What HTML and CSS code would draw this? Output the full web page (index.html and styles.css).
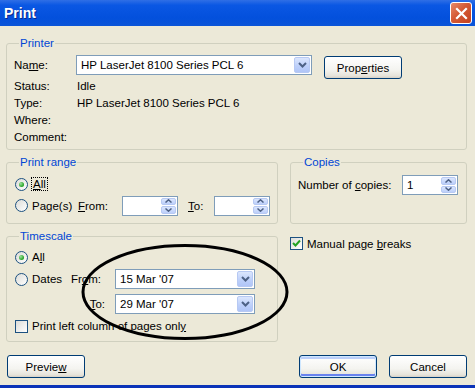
FILE: index.html
```html
<!DOCTYPE html>
<html>

<head>
    <meta charset="utf-8">
    <title>Print</title>
    <link rel="stylesheet" href="styles.css">
</head>

<body>
    <div class="window">
        <div class="titlebar">
            <span class="title">Print</span>
            <span class="close">
                <svg width="13" height="13" viewBox="0 0 13 13"><path d="M2 2 L11 11 M11 2 L2 11" stroke="#fff" stroke-width="2.2" stroke-linecap="square"/></svg>
            </span>
        </div>

        <div class="body">
            <!-- printer -->
            <fieldset class="group printer">
                <legend>Printer</legend>
                <div class="name-row">
                    <span class="lbl name-lbl">Na<u>m</u>e:</span>
                    <div class="combo wide">
                        <span class="combo-text">HP LaserJet 8100 Series PCL 6</span>
                        <span class="drop"><svg width="9" height="6" viewBox="0 0 9 6"><path d="M1 1 L4.5 4.5 L8 1" fill="none" stroke="#4d6185" stroke-width="2"/></svg></span>
                    </div>
                    <button class="btn props">Prop<u>e</u>rties</button>
                </div>
                <div class="info-row"><span class="lbl">Status:</span><span>Idle</span></div>
                <div class="info-row"><span class="lbl">Type:</span><span>HP LaserJet 8100 Series PCL 6</span></div>
                <div class="info-row"><span class="lbl">Where:</span><span></span></div>
                <div class="info-row"><span class="lbl">Comment:</span><span></span></div>
            </fieldset>

            <div class="middle">
                <div class="left-col">
                    <fieldset class="group range">
                        <legend>Print range</legend>
                        <div class="row r-all">
                            <span class="radio checked"></span><span class="focus"><u>A</u>ll</span>
                        </div>
                        <div class="row r-pages">
                            <span class="opt pages-opt"><span class="radio"></span>Page(s)</span>
                            <span class="from-lbl"><u>F</u>rom:</span>
                            <div class="spin">
                                <span class="spin-btns">
                                    <span class="sb"><svg width="7" height="4" viewBox="0 0 7 4"><path d="M0.5 3.5 L3.5 0.8 L6.5 3.5" fill="none" stroke="#4d6185" stroke-width="1.5"/></svg></span>
                                    <span class="sb"><svg width="7" height="4" viewBox="0 0 7 4"><path d="M0.5 0.5 L3.5 3.2 L6.5 0.5" fill="none" stroke="#4d6185" stroke-width="1.5"/></svg></span>
                                </span>
                            </div>
                            <span class="to-lbl"><u>T</u>o:</span>
                            <div class="spin">
                                <span class="spin-btns">
                                    <span class="sb"><svg width="7" height="4" viewBox="0 0 7 4"><path d="M0.5 3.5 L3.5 0.8 L6.5 3.5" fill="none" stroke="#4d6185" stroke-width="1.5"/></svg></span>
                                    <span class="sb"><svg width="7" height="4" viewBox="0 0 7 4"><path d="M0.5 0.5 L3.5 3.2 L6.5 0.5" fill="none" stroke="#4d6185" stroke-width="1.5"/></svg></span>
                                </span>
                            </div>
                        </div>
                    </fieldset>

                    <fieldset class="group timescale">
                        <legend>Timescale</legend>
                        <div class="row t-all">
                            <span class="radio checked"></span><span>A<u>l</u>l</span>
                        </div>
                        <div class="row t-dates">
                            <span class="opt dates-opt"><span class="radio"></span>Dates</span>
                            <span class="from-lbl">Fr<u>o</u>m:</span>
                            <div class="combo date">
                                <span class="combo-text">15 Mar '07</span>
                                <span class="drop"><svg width="9" height="6" viewBox="0 0 9 6"><path d="M1 1 L4.5 4.5 L8 1" fill="none" stroke="#4d6185" stroke-width="2"/></svg></span>
                            </div>
                        </div>
                        <div class="row t-to">
                            <span class="to-lbl2"><u>T</u>o:</span>
                            <div class="combo date">
                                <span class="combo-text">29 Mar '07</span>
                                <span class="drop"><svg width="9" height="6" viewBox="0 0 9 6"><path d="M1 1 L4.5 4.5 L8 1" fill="none" stroke="#4d6185" stroke-width="2"/></svg></span>
                            </div>
                        </div>
                        <div class="row t-left">
                            <span class="check"></span><span>Print left column of pages onl<u>y</u></span>
                        </div>
                    </fieldset>
                </div>

                <div class="right-col">
                    <fieldset class="group copies">
                        <legend>Copies</legend>
                        <div class="row c-num">
                            <span class="copies-lbl">Number of <u>c</u>opies:</span>
                            <div class="spin">
                                <span class="spin-text">1</span>
                                <span class="spin-btns">
                                    <span class="sb"><svg width="7" height="4" viewBox="0 0 7 4"><path d="M0.5 3.5 L3.5 0.8 L6.5 3.5" fill="none" stroke="#4d6185" stroke-width="1.5"/></svg></span>
                                    <span class="sb"><svg width="7" height="4" viewBox="0 0 7 4"><path d="M0.5 0.5 L3.5 3.2 L6.5 0.5" fill="none" stroke="#4d6185" stroke-width="1.5"/></svg></span>
                                </span>
                            </div>
                        </div>
                    </fieldset>
                    <div class="manual">
                        <span class="check checked"><svg width="11" height="11" viewBox="0 0 11 11"><path d="M2 5 L4.5 7.5 L9 2.5" fill="none" stroke="#21a121" stroke-width="2"/></svg></span>
                        <span>Manual page <u>b</u>reaks</span>
                    </div>
                </div>
            </div>

            <div class="buttons">
                <button class="btn preview">Previe<u>w</u></button>
                <div class="btn-pair">
                    <button class="btn default">OK</button>
                    <button class="btn">Cancel</button>
                </div>
            </div>
        </div>

        <!-- hand drawn mark over the dates -->
        <svg class="mark" width="475" height="388" viewBox="0 0 475 388">
            <ellipse cx="185" cy="292" rx="102" ry="46.5" fill="none" stroke="#000" stroke-width="3"/>
        </svg>
    </div>
</body>

</html>
```

FILE: styles.css
```css
* {
    box-sizing: border-box;
}

html,
body {
    margin: 0;
    padding: 0;
}

body {
    width: 475px;
    height: 388px;
    overflow: hidden;
    background: #ece9d8;
    font-family: "Liberation Sans", Arial, sans-serif;
    font-size: 11.5px;
    color: #000;
}

.window {
    position: relative;
    width: 475px;
    height: 388px;
    display: flex;
    flex-direction: column;
    border-bottom: 3px solid #0b33b8;
}

.titlebar {
    flex: none;
    height: 26px;
    display: flex;
    align-items: center;
    justify-content: space-between;
    padding: 0 3px 0 4px;
    background: linear-gradient(#2f6fe6, #0a57e3 20%, #0350dc 70%, #0b55d8);
}

.title {
    color: #fff;
    font-weight: bold;
    font-size: 14px;
    text-shadow: 1px 1px 0 #0a2a8c;
}

.close {
    width: 22px;
    height: 22px;
    display: flex;
    align-items: center;
    justify-content: center;
    border: 1px solid #fff;
    border-radius: 3px;
    background: linear-gradient(135deg, #e88a6a, #d55a35 45%, #c4411e);
}

.body {
    flex: 1;
    display: flex;
    flex-direction: column;
    padding: 10px 8px 0 6px;
}

/* group boxes */
.group {
    margin: 0;
    padding: 0 7px;
    border: 1px solid #d0d0bf;
    border-radius: 3px;
    min-width: 0;
}

.group legend {
    margin-left: 5px;
    padding: 0 1px;
    line-height: 14px;
    color: #0046d5;
}

.printer {
    height: 114px;
    padding-top: 4px;
}

.name-row {
    display: flex;
    align-items: flex-start;
    height: 23px;
}

.lbl {
    width: 63px;
    flex: none;
}

.name-lbl {
    width: 62px;
    line-height: 20px;
    margin-top: 1px;
}

.info-row {
    display: flex;
    align-items: center;
    height: 17px;
}

/* combo boxes */
.combo {
    display: flex;
    align-items: stretch;
    height: 20px;
    background: #fff;
    border: 1px solid #7f9db9;
    padding: 1px;
}

.combo.wide {
    width: 236px;
    margin-top: 1px;
}

.combo.date {
    width: 140px;
}

.combo-text {
    flex: 1;
    padding-left: 3px;
    line-height: 16px;
}

.drop {
    width: 16px;
    display: flex;
    align-items: center;
    justify-content: center;
    border: 1px solid #b7c9f3;
    border-radius: 2px;
    background: linear-gradient(#dbe6fd, #bccffa 60%, #b0c5f7);
}

.btn {
    width: 78px;
    height: 23px;
    padding: 0;
    font-family: inherit;
    font-size: 11.5px;
    color: #000;
    border: 1px solid #003c74;
    border-radius: 3px;
    background: linear-gradient(#ffffff, #f4f4f0 60%, #e6e3da 90%, #d6d0c5);
}

.props {
    margin-left: 12px;
    margin-top: 2px;
}

.btn.default {
    box-shadow: inset 0 0 0 1px #cee7ff, inset 0 -2px 0 1px #6982ee, inset 0 2px 0 1px #bccffa;
}

/* middle part */
.middle {
    display: flex;
    gap: 12px;
    margin-top: 5px;
}

.left-col {
    width: 272px;
    display: flex;
    flex-direction: column;
    gap: 5px;
}

.right-col {
    width: 177px;
    display: flex;
    flex-direction: column;
}

.row {
    display: flex;
    align-items: center;
}

.range {
    height: 69px;
    padding-top: 6px;
}

.r-all {
    height: 18px;
}

.r-pages {
    height: 21px;
    margin-top: 2px;
}

.radio {
    width: 13px;
    height: 13px;
    flex: none;
    margin: 0 4px 0 1px;
    border: 1px solid #1c5180;
    border-radius: 50%;
    background: linear-gradient(135deg, #dcdcd7, #fff);
    display: flex;
    align-items: center;
    justify-content: center;
}

.radio.checked::after {
    content: "";
    width: 5px;
    height: 5px;
    border-radius: 50%;
    background: radial-gradient(circle at 35% 35%, #9de29d, #21a121 70%);
}

.focus {
    outline: 1px dotted #000;
    outline-offset: 0;
    padding: 0 1px;
}

.opt {
    display: flex;
    align-items: center;
    flex: none;
}

.pages-opt {
    width: 64px;
}

.dates-opt {
    width: 57px;
}

.from-lbl {
    width: 44px;
    flex: none;
}

.to-lbl {
    width: 26px;
    margin-left: 10px;
    flex: none;
}

.spin {
    width: 56px;
    height: 20px;
    flex: none;
    display: flex;
    justify-content: flex-end;
    align-items: stretch;
    background: #fff;
    border: 1px solid #7f9db9;
    padding: 1px;
}

.spin-text {
    flex: 1;
    padding-left: 3px;
    line-height: 16px;
}

.spin-btns {
    width: 15px;
    display: flex;
    flex-direction: column;
    gap: 1px;
}

.sb {
    flex: 1;
    display: flex;
    align-items: center;
    justify-content: center;
    border: 1px solid #b7c9f3;
    border-radius: 2px;
    background: linear-gradient(#dbe6fd, #bccffa);
}

.timescale {
    height: 113px;
    padding-top: 5px;
}

.t-all {
    height: 18px;
}

.t-dates {
    height: 22px;
    margin-top: 2px;
}

.t-to {
    height: 22px;
    margin-top: 3px;
}

.to-lbl2 {
    width: 101px;
    flex: none;
    text-align: right;
    padding-right: 10px;
}

.t-left {
    height: 16px;
    margin-top: 3px;
}

.check {
    width: 13px;
    height: 13px;
    flex: none;
    margin: 0 4px 0 1px;
    border: 1px solid #1c5180;
    background: linear-gradient(135deg, #dcdcd7, #fff);
    display: flex;
    align-items: center;
    justify-content: center;
}

.copies {
    height: 69px;
    padding-top: 6px;
}

.c-num {
    height: 20px;
}

.copies-lbl {
    width: 104px;
    flex: none;
}

.manual {
    display: flex;
    align-items: center;
    margin-top: 13px;
}

.manual .check {
    margin-left: 0;
}

/* bottom buttons */
.buttons {
    display: flex;
    justify-content: space-between;
    margin-top: 13px;
}

.preview {
    margin-left: 1px;
}

.btn-pair {
    display: flex;
    gap: 12px;
}

.mark {
    position: absolute;
    left: 0;
    top: 0;
    pointer-events: none;
}
```
